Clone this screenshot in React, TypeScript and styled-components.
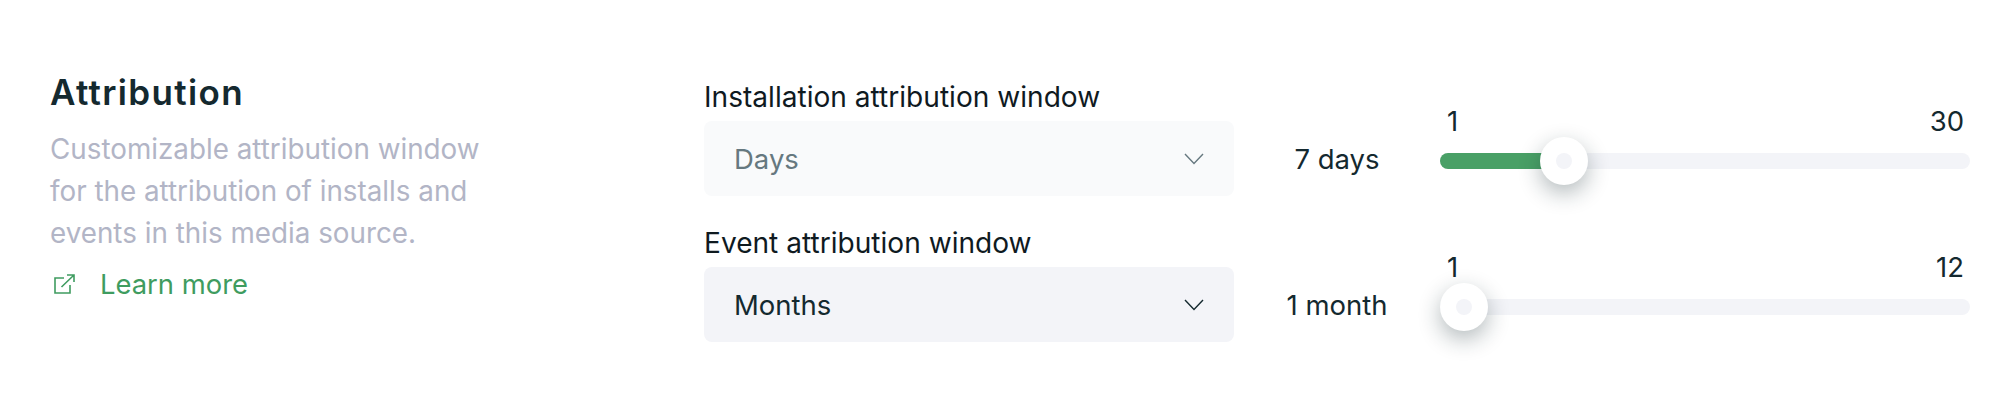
import React from 'react';
import styled, { createGlobalStyle } from 'styled-components';

const Global = createGlobalStyle`
  html, body { margin: 0; background: #fff; }
  body { font-family: Inter, "Liberation Sans", sans-serif; }
`;

const Page = styled.section`
  display: flex;
  width: 2008px;
  height: 410px;
  box-sizing: border-box;
  padding: 70px 38px 0 50px;
`;

const Intro = styled.div`
  width: 654px;
  flex-shrink: 0;
`;

const Title = styled.h2`
  margin: 0 0 14px;
  font-size: 35px;
  line-height: 44px;
  font-weight: 600;
  letter-spacing: 1.35px;
  color: #14292f;
`;

const Description = styled.p`
  margin: 0;
  width: 450px;
  font-size: 27.8px;
  line-height: 42px;
  color: #b2b5c6;
`;

const LearnMore = styled.a`
  display: flex;
  align-items: center;
  gap: 25px;
  margin-top: 9px;
  padding-left: 4px;
  font-size: 27.4px;
  line-height: 42px;
  color: #3f9c60;
`;

const Settings = styled.div`
  flex: 1;
  display: flex;
  flex-direction: column;
  gap: 26px;
  padding-top: 6px;
`;

const Row = styled.div`
  display: grid;
  grid-template-columns: 530px 206px 530px;
  grid-template-rows: 45px 75px;
`;

const Label = styled.label`
  grid-column: 1;
  grid-row: 1;
  font-size: 28.1px;
  line-height: 42px;
  color: #0f1a1f;
`;

const Select = styled.div<{ $disabled?: boolean }>`
  grid-column: 1;
  grid-row: 2;
  display: flex;
  align-items: center;
  justify-content: space-between;
  padding: 0 30px;
  border-radius: 8px;
  background: ${({ $disabled }) => ($disabled ? '#f9fafb' : '#f3f4f8')};
  color: ${({ $disabled }) => ($disabled ? '#66787f' : '#14292f')};
  font-size: 27.5px;
`;

const Value = styled.div`
  grid-column: 2;
  grid-row: 2;
  display: flex;
  align-items: center;
  justify-content: center;
  font-size: 27.5px;
  color: #14292f;
`;

const SliderBox = styled.div`
  grid-column: 3;
  grid-row: 1 / span 2;
  display: flex;
  flex-direction: column;
  padding-top: 29px;
`;

const Bounds = styled.div`
  display: flex;
  justify-content: space-between;
  padding: 0 6px 0 7px;
  font-size: 27.5px;
  line-height: 32px;
  color: #14292f;
`;

const Track = styled.div`
  position: relative;
  height: 16px;
  margin-top: 16px;
  border-radius: 8px;
  background: #f3f4f8;
`;

const Fill = styled.div`
  height: 100%;
  border-radius: 8px 0 0 8px;
  background: #49a066;
`;

const Thumb = styled.div`
  position: absolute;
  top: -16px;
  width: 48px;
  height: 48px;
  display: flex;
  align-items: center;
  justify-content: center;
  border-radius: 50%;
  background: #fff;
  box-shadow: 0 8px 22px rgba(20, 41, 47, 0.32);
  &::after {
    content: '';
    width: 16px;
    height: 16px;
    border-radius: 50%;
    background: #f3f4f8;
  }
`;

const Chevron = ({ color }: { color: string }) => (
  <svg width="20" height="12" viewBox="0 0 20 12" fill="none">
    <path d="M1 1l9 9.5L19 1" stroke={color} strokeWidth="1.4" />
  </svg>
);

const ExternalLink = () => (
  <svg width="21" height="20" viewBox="0 0 21 20" fill="none" stroke="#3f9c60" strokeWidth="1.6">
    <path d="M10 4H1v15h15v-8" />
    <path d="M7.5 13L20 1M13 1h7v7" />
  </svg>
);

type SettingProps = {
  label: string;
  unit: string;
  value: string;
  max: number;
  offset: number;
  disabled?: boolean;
};

const Setting = ({ label, unit, value, max, offset, disabled }: SettingProps) => (
  <Row>
    <Label>{label}</Label>
    <Select $disabled={disabled}>
      {unit}
      <Chevron color={disabled ? '#66787f' : '#14292f'} />
    </Select>
    <Value>{value}</Value>
    <SliderBox>
      <Bounds>
        <span>1</span>
        <span>{max}</span>
      </Bounds>
      <Track>
        {offset > 0 && <Fill style={{ width: offset + 24 }} />}
        <Thumb style={{ left: offset }} />
      </Track>
    </SliderBox>
  </Row>
);

export default function App() {
  return (
    <Page>
      <Global />
      <Intro>
        <Title>Attribution</Title>
        <Description>
          Customizable attribution window for the attribution of installs and events in this media source.
        </Description>
        <LearnMore>
          <ExternalLink />
          Learn more
        </LearnMore>
      </Intro>
      <Settings>
        <Setting label="Installation attribution window" unit="Days" value="7 days" max={30} offset={100} disabled />
        <Setting label="Event attribution window" unit="Months" value="1 month" max={12} offset={0} />
      </Settings>
    </Page>
  );
}
